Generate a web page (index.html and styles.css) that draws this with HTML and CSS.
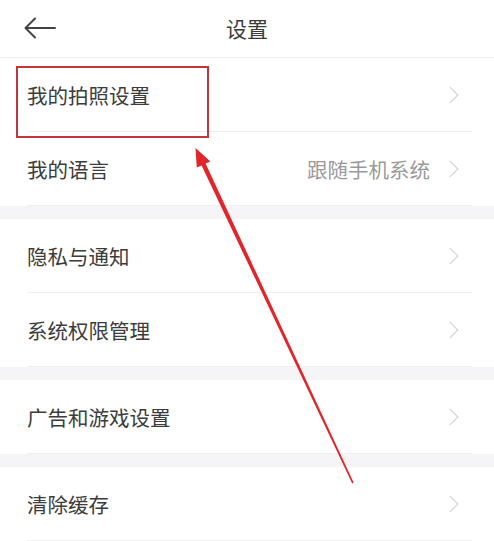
FILE: index.html
```html
<!DOCTYPE html>
<html lang="zh-CN">
<head>
<meta charset="utf-8">
<title>设置</title>
<link rel="stylesheet" href="styles.css">
</head>
<body>
<div class="page">
  <header class="topbar">
    <svg class="back" width="32" height="22" viewBox="0 0 32 22">
      <path d="M31 11H2M11 1.5L1.5 11L11 20.5" fill="none" stroke="#444" stroke-width="2" stroke-linecap="round" stroke-linejoin="round"/>
    </svg>
    <h1 class="title">设置</h1>
  </header>

  <section class="group">
    <div class="row"><span class="label">我的拍照设置</span><span class="chev"></span></div>
    <div class="row"><span class="label">我的语言</span><span class="value">跟随手机系统</span><span class="chev"></span></div>
  </section>
  <section class="group">
    <div class="row"><span class="label">隐私与通知</span><span class="chev"></span></div>
    <div class="row"><span class="label">系统权限管理</span><span class="chev"></span></div>
  </section>
  <section class="group">
    <div class="row"><span class="label">广告和游戏设置</span><span class="chev"></span></div>
  </section>
  <section class="group">
    <div class="row"><span class="label">清除缓存</span><span class="chev"></span></div>
  </section>

  <div class="highlight"></div>
  <svg class="arrow" width="494" height="541" viewBox="0 0 494 541">
    <polygon points="195.5,148 210.4,161.5 205.6,163.6 353.6,482.4 352.2,483.6 201.6,165.4 196.8,167.6" fill="#e3242b"/>
  </svg>
</div>
</body>
</html>
```

FILE: styles.css
```css
* { box-sizing: border-box; }
html, body { margin: 0; padding: 0; }
body {
  width: 494px;
  height: 541px;
  overflow: hidden;
  background: #f5f5f7;
  font-family: "Noto Sans CJK SC", "Noto Sans", sans-serif;
  color: #3c3c3c;
}
.page {
  position: relative;
  width: 494px;
  height: 541px;
  display: flex;
  flex-direction: column;
  gap: 13px;
}
.topbar {
  height: 58px;
  flex: none;
  background: #fff;
  border-bottom: 1px solid #efefef;
  display: flex;
  align-items: center;
  justify-content: center;
  position: relative;
  margin-bottom: -13px;
}
.back {
  position: absolute;
  left: 24px;
  top: 17px;
}
.title {
  margin: 0;
  font-size: 21px;
  font-weight: 400;
  color: #3a3a3a;
  margin-top: -2px;
}
.group {
  background: #fff;
  flex: none;
}
.row {
  height: 74px;
  margin: 0 22px 0 27px;
  border-bottom: 1px solid #efefef;
  display: flex;
  align-items: center;
}
.label {
  font-size: 20.5px;
  flex: 1;
}
.value {
  font-size: 20.5px;
  color: #9a9a9a;
  margin-right: 14px;
}
.chev {
  width: 12px;
  height: 12px;
  border-top: 1.8px solid #d0d0d0;
  border-right: 1.8px solid #d0d0d0;
  transform: rotate(45deg);
  margin-right: 16px;
}
.highlight {
  position: absolute;
  left: 16px;
  top: 66px;
  width: 193px;
  height: 72px;
  border: 2.5px solid #c4343b;
}
.arrow {
  position: absolute;
  left: 0;
  top: 0;
}
```
